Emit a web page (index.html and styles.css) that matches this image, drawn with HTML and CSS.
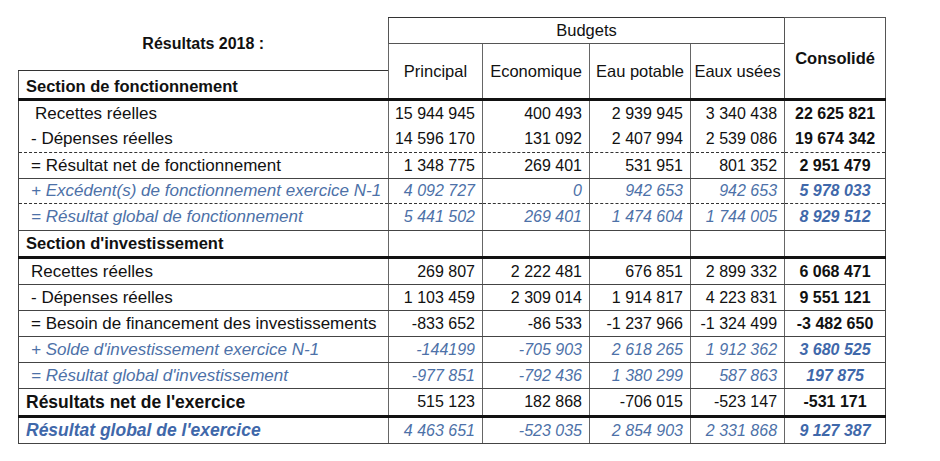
FILE: index.html
```html
<!DOCTYPE html>
<html lang="fr">
<head>
<meta charset="utf-8">
<title>Résultats 2018</title>
<link rel="stylesheet" href="styles.css">
</head>
<body>
<div class="sheet">
<table class="results">
  <colgroup>
    <col class="c-label">
    <col class="c-principal">
    <col class="c-eco">
    <col class="c-eau">
    <col class="c-usees">
    <col class="c-conso">
  </colgroup>
  <thead>
    <tr class="h1">
      <td class="title" rowspan="2">Résultats 2018 :</td>
      <th class="budgets" colspan="4">Budgets</th>
      <th class="conso-head" rowspan="3">Consolidé</th>
    </tr>
    <tr class="h2">
      <th class="sub" rowspan="2">Principal</th>
      <th class="sub" rowspan="2">Economique</th>
      <th class="sub" rowspan="2">Eau potable</th>
      <th class="sub" rowspan="2">Eaux usées</th>
    </tr>
    <tr class="h3">
      <td class="section">Section de fonctionnement</td>
    </tr>
  </thead>
  <tbody>
    <tr class="r tall b-none">
      <td class="lbl indent">Recettes réelles</td>
      <td class="num">15 944 945</td><td class="num">400 493</td><td class="num">2 939 945</td><td class="num">3 340 438</td><td class="tot">22 625 821</td>
    </tr>
    <tr class="r b-dash">
      <td class="lbl">- Dépenses réelles</td>
      <td class="num">14 596 170</td><td class="num">131 092</td><td class="num">2 407 994</td><td class="num">2 539 086</td><td class="tot">19 674 342</td>
    </tr>
    <tr class="r b-solid">
      <td class="lbl">= Résultat net de fonctionnement</td>
      <td class="num">1 348 775</td><td class="num">269 401</td><td class="num">531 951</td><td class="num">801 352</td><td class="tot">2 951 479</td>
    </tr>
    <tr class="r short b-dash blue">
      <td class="lbl">+ Excédent(s) de fonctionnement exercice N-1</td>
      <td class="num">4 092 727</td><td class="num">0</td><td class="num">942 653</td><td class="num">942 653</td><td class="tot">5 978 033</td>
    </tr>
    <tr class="r tall b-solid blue">
      <td class="lbl">= Résultat global de fonctionnement</td>
      <td class="num">5 441 502</td><td class="num">269 401</td><td class="num">1 474 604</td><td class="num">1 744 005</td><td class="tot">8 929 512</td>
    </tr>
    <tr class="r tall b-thick">
      <td class="section">Section d'investissement</td>
      <td class="num"></td><td class="num"></td><td class="num"></td><td class="num"></td><td class="tot"></td>
    </tr>
    <tr class="r tall b-solid">
      <td class="lbl">Recettes réelles</td>
      <td class="num">269 807</td><td class="num">2 222 481</td><td class="num">676 851</td><td class="num">2 899 332</td><td class="tot">6 068 471</td>
    </tr>
    <tr class="r b-solid">
      <td class="lbl">- Dépenses réelles</td>
      <td class="num">1 103 459</td><td class="num">2 309 014</td><td class="num">1 914 817</td><td class="num">4 223 831</td><td class="tot">9 551 121</td>
    </tr>
    <tr class="r b-solid">
      <td class="lbl">= Besoin de financement des investissements</td>
      <td class="num">-833 652</td><td class="num">-86 533</td><td class="num">-1 237 966</td><td class="num">-1 324 499</td><td class="tot">-3 482 650</td>
    </tr>
    <tr class="r b-solid blue">
      <td class="lbl">+ Solde d'investissement exercice N-1</td>
      <td class="num">-144199</td><td class="num">-705 903</td><td class="num">2 618 265</td><td class="num">1 912 362</td><td class="tot">3 680 525</td>
    </tr>
    <tr class="r b-solid blue">
      <td class="lbl">= Résultat global d'investissement</td>
      <td class="num">-977 851</td><td class="num">-792 436</td><td class="num">1 380 299</td><td class="num">587 863</td><td class="tot">197 875</td>
    </tr>
    <tr class="r taller b-thick">
      <td class="section wide">Résultats net de l'exercice</td>
      <td class="num">515 123</td><td class="num">182 868</td><td class="num">-706 015</td><td class="num">-523 147</td><td class="tot">-531 171</td>
    </tr>
    <tr class="r tall b-solid blue">
      <td class="section final">Résultat global de l'exercice</td>
      <td class="num">4 463 651</td><td class="num">-523 035</td><td class="num">2 854 903</td><td class="num">2 331 868</td><td class="tot">9 127 387</td>
    </tr>
  </tbody>
</table>
</div>
</body>
</html>
```

FILE: styles.css
```css
html, body {
  margin: 0;
  padding: 0;
  background: #ffffff;
}

body {
  font-family: "Liberation Sans", Arial, sans-serif;
  color: #111111;
}

.sheet {
  padding: 17px 0 0 18px;
}

.results {
  border-collapse: collapse;
  table-layout: fixed;
  width: 867px;
}

.c-label { width: 370px; }
.c-principal { width: 94px; }
.c-eco { width: 107px; }
.c-eau { width: 101px; }
.c-usees { width: 94px; }
.c-conso { width: 101px; }

.results th,
.results td {
  padding: 0;
  white-space: nowrap;
  overflow: hidden;
  vertical-align: middle;
}

/* ---------- header ---------- */
.h1 { height: 26px; }
.h2 { height: 27px; }
.h3 { height: 29px; }

.title {
  border: none;
  text-align: center;
  font-weight: bold;
  font-size: 16px;
  padding-top: 2px;
}

.budgets {
  font-weight: normal;
  font-size: 16.5px;
  text-align: center;
  border: 1px solid #555555;
  border-top-color: #333333;
}

.sub {
  font-weight: normal;
  font-size: 16.5px;
  text-align: center;
  border-left: 1px solid #666666;
  border-right: 1px solid #666666;
  border-top: 1px solid #555555;
  border-bottom: 3px solid #111111;
}

.conso-head {
  font-weight: bold;
  font-size: 16.5px;
  text-align: center;
  border: 1px solid #555555;
  border-bottom: 3px solid #111111;
  padding-bottom: 2px;
}

.h3 .section {
  border-top: 1px solid #333333;
  border-bottom: 3px solid #111111;
  border-left: 1px solid #555555;
  border-right: 1px solid #666666;
  padding-top: 3px;
}

/* ---------- body rows ---------- */
.r { height: 26px; }
.r.short { height: 25px; }
.r.tall { height: 27px; }
.r.taller { height: 28px; }

.r td {
  border-left: 1px solid #666666;
  border-right: 1px solid #666666;
}

.r td:first-child {
  border-left-color: #444444;
}

.r td:last-child {
  border-right-color: #444444;
}

.b-none td { border-bottom: none; }
.b-dash td { border-bottom: 1px dashed #333333; }
.b-solid td { border-bottom: 1px solid #444444; }
.b-thick td { border-bottom: 3px solid #111111; }

.lbl {
  font-size: 17px;
  padding-left: 12px !important;
}

.lbl.indent {
  padding-left: 16px !important;
}

.section {
  font-weight: bold;
  font-size: 16.5px;
  padding-left: 7px !important;
}

.section.wide {
  font-size: 17.5px;
}

.num {
  font-size: 16px;
  text-align: right;
  padding-right: 7px !important;
}

.tot {
  font-size: 16px;
  font-weight: bold;
  text-align: center;
}

.blue td {
  color: #4d71a8;
  font-style: italic;
}

.blue .tot {
  color: #3f68aa;
}

.blue .final {
  color: #3f68aa;
  font-size: 17.5px;
}
```
